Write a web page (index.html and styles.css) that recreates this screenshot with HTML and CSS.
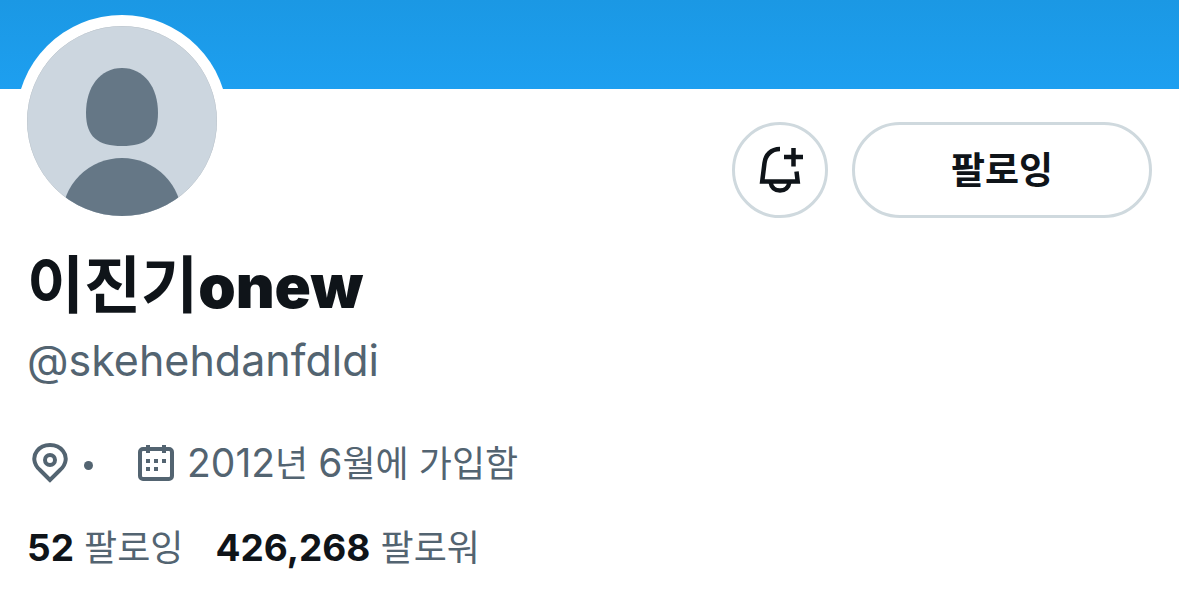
FILE: index.html
```html
<!DOCTYPE html>
<html lang="ko">

<head>
    <meta charset="UTF-8">
    <meta name="viewport" content="width=device-width, initial-scale=1.0">
    <title>이진기onew</title>
    <link rel="stylesheet" href="styles.css">
</head>

<body>

    <div class="banner"></div>

    <main class="profile">
        <div class="top">
            <svg class="avatar" viewBox="0 0 212 212" role="img" aria-label="프로필 사진">
                <clipPath id="round"><circle cx="106" cy="106" r="95" /></clipPath>
                <circle cx="106" cy="106" r="106" fill="#fff" />
                <g clip-path="url(#round)">
                    <rect width="212" height="212" fill="#ccd6df" />
                    <circle cx="106" cy="106" r="95" fill="none" stroke="#bcc4cb" />
                    <path d="M106 53c22 0 36 19 36 45 0 24-12 33-36 33s-36-9-36-33c0-26 14-45 36-45z" fill="#657786" />
                    <circle cx="106" cy="203" r="60" fill="#657786" />
                </g>
            </svg>

            <div class="actions">
                <button type="button" class="bell" aria-label="알림">
                    <svg viewBox="0 0 48 48" fill="none" stroke="#0f1419" stroke-width="4.500">
                        <path d="M24 3C15 3 9.500 9 8.500 17L6.200 35.500h35.500l-1.200-10" />
                        <path d="M14.500 36c1 6 5 8.500 9.500 8.500s8.500-2.500 9.500-8.500" />
                        <path d="M37.500 2v18.500M28 11h19" />
                    </svg>
                </button>
                <button type="button" class="following">팔로잉</button>
            </div>
        </div>

        <h1><span class="ko">이진기</span>onew</h1>
        <p class="handle">@skehehdanfdldi</p>

        <div class="info">
            <svg class="pin" viewBox="0 0 36 42" fill="none" stroke="#536471" stroke-width="4">
                <path d="M18 38L8 28C1 22 1 14 5 9c6-8 20-8 26 0 4 5 4 13-3 19z" />
                <circle cx="18" cy="18" r="5" />
            </svg>
            <span class="dot"></span>
            <svg class="calendar" viewBox="0 0 36 38">
                <rect x="2" y="5" width="32" height="30" rx="3" fill="none" stroke="#536471" stroke-width="4" />
                <path d="M8 1h4v8H8zM24 1h4v8h-4zM8 15h4v4H8zM16 15h4v4h-4zM24 15h4v4h-4zM8 23h4v4H8zM16 23h4v4h-4z" fill="#536471" />
            </svg>
            <span>2012<span class="ko">년 </span>6<span class="ko">월에 가입함</span></span>
        </div>

        <div class="counts">
            <a href="#"><b>52</b><span class="ko"> 팔로잉</span></a>
            <a href="#"><b>426,268</b><span class="ko"> 팔로워</span></a>
        </div>
    </main>

</body>

</html>
```
FILE: styles.css
```css
* {
    box-sizing: border-box;
}

body {
    margin: 0;
    background-color: #fff;
    color: #0f1419;
    font-family: Inter, "Noto Sans CJK KR", sans-serif;
}

.banner {
    height: 89px;
    background: linear-gradient(#1b98e4, #1d9ff0);
}

.profile {
    padding: 0 27px;
}

.top {
    display: flex;
    justify-content: space-between;
    align-items: flex-end;
    margin-top: -74px;
}

.avatar {
    width: 212px;
    height: 212px;
    margin-left: -11px;
}

.actions {
    display: flex;
    gap: 24px;
    margin-bottom: 9px;
}

button {
    height: 96px;
    padding: 0;
    border: 3px solid #cfd9de;
    border-radius: 48px;
    background-color: #fff;
    color: #0f1419;
    cursor: pointer;
}

.bell {
    display: flex;
    align-items: center;
    justify-content: center;
    width: 96px;
}

.bell svg {
    width: 48px;
    height: 48px;
}

.following {
    width: 300px;
    padding-bottom: 4px;
    font-family: "Noto Sans CJK KR", sans-serif;
    font-size: 37px;
    font-weight: 700;
}

.ko {
    font-family: "Noto Sans CJK KR", sans-serif;
    line-height: 1;
}

h1 {
    margin: 21px 0 0;
    font-size: 60px;
    font-weight: 900;
    line-height: 76px;
}

h1 .ko {
    font-size: 62px;
    font-weight: 700;
}

.handle {
    margin: 6px 0 0;
    color: #536471;
    font-size: 43px;
    line-height: 60px;
}

.info {
    display: flex;
    align-items: center;
    margin-top: 45px;
    color: #536471;
    font-size: 39px;
    line-height: 56px;
}

.info .ko,
.counts .ko {
    font-size: 36px;
}

.pin {
    width: 36px;
    height: 42px;
    margin-left: 5px;
}

.dot {
    width: 9px;
    height: 9px;
    margin: 4px 45px 0 16px;
    border-radius: 50%;
    background-color: #536471;
}

.calendar {
    width: 36px;
    height: 38px;
    margin-right: 13px;
}

.counts {
    display: flex;
    gap: 32px;
    margin-top: 29px;
    font-size: 37px;
    line-height: 56px;
}

.counts a {
    color: #536471;
    text-decoration: none;
}

.counts b {
    color: #0f1419;
}
```
